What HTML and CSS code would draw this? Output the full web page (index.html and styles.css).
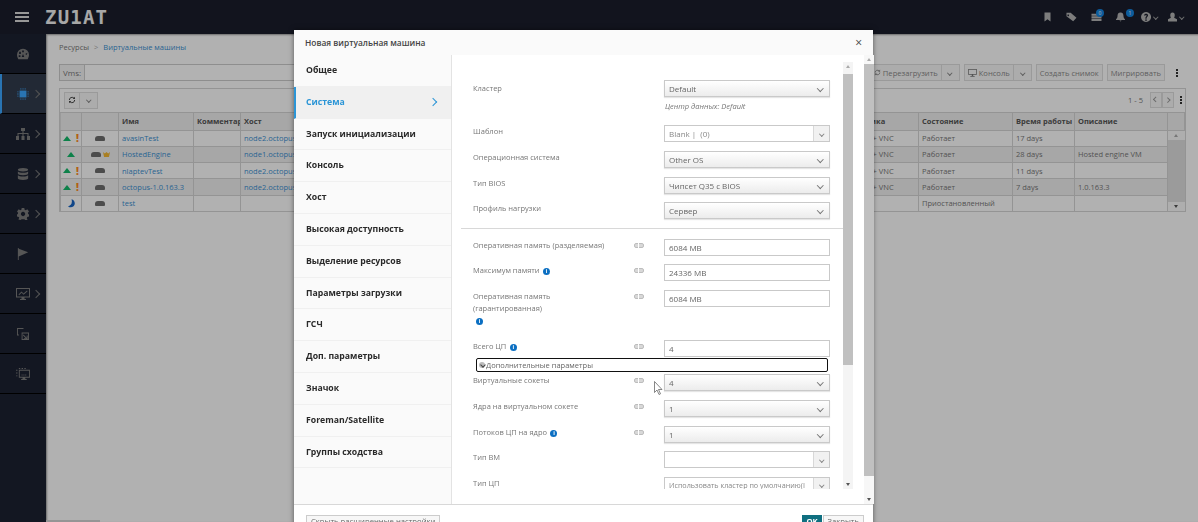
FILE: index.html
```html
<!DOCTYPE html>
<html>
<head>
    <title>Виртуальные машины</title>
    <link rel="stylesheet" href="styles.css">
</head>
<body>
    <header class="topbar">
        <div class="burger"><span></span><span></span><span></span></div>
        <div class="logo">ZU1AT</div>
        <div class="top-icons">
            <svg class="top-icon icon-sm" viewBox="0 0 12 12"><path d="M2 0h8v12L6 9l-4 3z"/></svg>
            <svg class="top-icon icon-lg" viewBox="0 0 12 12"><path d="M0 1h5l7 6-4 4-8-6zM2 3a1 1 0 1 0 .1 0z" fill-rule="evenodd"/></svg>
            <div class="top-badge-wrap">
                <svg class="top-icon icon-lg" viewBox="0 0 12 12"><path d="M0 2h12v2.500H0zM0 5.200h12v2.500H0zM0 8.400h12v2.500H0z"/></svg>
                <span class="badge badge-stack">0</span>
            </div>
            <div class="top-badge-wrap">
                <svg class="top-icon icon-sm" viewBox="0 0 12 12"><path d="M6 0c3 0 4 2 4 5 0 2 1 3 2 4v1H0V9c1-1 2-2 2-4 0-3 1-5 4-5zM4.500 10.500h3L6 12z"/></svg>
                <span class="badge badge-bell">1</span>
            </div>
            <div class="top-menu top-help">
                <svg class="top-icon" viewBox="0 0 12 12"><path d="M6 0a6 6 0 1 0 .1 0zM5 9h2v1.500H5zM3.500 4C4 1.500 8.500 1.500 8.500 4c0 2-2 1.800-1.800 4H5.300C5 5.500 6.800 5.500 6.600 4.200 6.400 3.300 5.300 3.500 5 4.500z" fill-rule="evenodd"/></svg>
                <i class="caret caret-top"></i>
            </div>
            <div class="top-menu top-user">
                <svg class="top-icon icon-sm" viewBox="0 0 12 12"><path d="M6 0c2 0 3 1.500 3 3.500S8 7 8 7l4 2v3H0V9l4-2s-1-1.500-1-3.500S4 0 6 0z"/></svg>
                <i class="caret caret-top"></i>
            </div>
        </div>
    </header>

    <div class="main">
        <nav class="sidebar">
            <div class="side-item">
                <svg class="side-icon" viewBox="0 0 14 12"><path d="M7 0a7 7 0 0 1 7 7c0 2-.7 3.600-1.500 5h-11C.7 10.600 0 9 0 7a7 7 0 0 1 7-7zM6 2v2h2V2zM2.500 3.500V6h2V3.500zM9.500 6l1.800 1.200.9-2.700zM2 7.500v2h2v-2zM7 6L5.500 9.500h3z" fill-rule="evenodd"/></svg>
            </div>
            <div class="side-item side-active">
                <svg class="side-icon side-chip" viewBox="0 0 14 14"><path d="M3 3h8v8H3z"/><path d="M4 0h1v2H4zM6.500 0h1v2h-1zM9 0h1v2H9zM4 12h1v2H4zM6.500 12h1v2h-1zM9 12h1v2H9zM0 4h2v1H0zM0 6.500h2v1H0zM0 9h2v1H0zM12 4h2v1h-2zM12 6.500h2v1h-2zM12 9h2v1h-2z" opacity=".7"/></svg>
                <i class="side-arrow"></i>
            </div>
            <div class="side-item">
                <svg class="side-icon side-wide" viewBox="0 0 14 12"><path d="M5 0h4v3H7.500v2H12.500v3H14v4h-3V8h.5V6h-4v2H8.500v4h-3V8h1V6h-4v2H3v4H0V8h1.500V5h5V3H5z"/></svg>
                <i class="side-arrow"></i>
            </div>
            <div class="side-item">
                <svg class="side-icon" viewBox="0 0 12 14"><path d="M0 2c0-1 2.500-2 6-2s6 1 6 2-2.500 2-6 2-6-1-6-2zM0 4c1 1 3 1.500 6 1.500S11 5 12 4v2.500c0 1-2.500 2-6 2s-6-1-6-2zM0 8.500c1 1 3 1.500 6 1.500s5-.5 6-1.500V12c0 1-2.500 2-6 2s-6-1-6-2z"/></svg>
                <i class="side-arrow"></i>
            </div>
            <div class="side-item">
                <svg class="side-icon" viewBox="0 0 14 14"><path d="M5.500 0h3l.4 2 1.400.6L12 1.500 14 4l-1.300 1.500.3 1.500 1 .5v2.500l-2 .5-.6 1.400 1 1.800-2.400.7-1.400-1.300H5.400L4 14l-2.400-.7 1-1.800L2 10.500 0 10V7.500l1-.5.300-1.500L0 4l2-2.500 1.700 1.100L5.100 2zM7 4.500a2.500 2.500 0 1 0 .1 0z" fill-rule="evenodd"/></svg>
                <i class="side-arrow"></i>
            </div>
            <div class="side-item">
                <svg class="side-icon" viewBox="0 0 14 14"><path d="M1 0h1v14H1zM2 1l11 4-11 5z"/></svg>
            </div>
            <div class="side-item">
                <svg class="side-icon side-wide" viewBox="0 0 14 12"><path d="M0 0h14v9.500H8.500V11H10v1H4v-1h1.500V9.500H0zM1 1v7.500h12V1zM2.500 6.500l3-3 2 2 3.500-3 .6.700-4 3.500-2-2-2.500 2.500z" fill-rule="evenodd"/></svg>
                <i class="side-arrow"></i>
            </div>
            <div class="side-item">
                <svg class="side-icon" viewBox="0 0 13 13"><path d="M0 0h7v1H1v6h1v1H0zM5 5h8v8H5zM6 6v6h6V6zM7 7l3.500 3.500V8h1v4h-4v-1h2L6.500 8z" fill-rule="evenodd"/></svg>
            </div>
            <div class="side-item">
                <svg class="side-icon side-wide" viewBox="0 0 15 13"><path d="M3 2h12v8.500h-5V12h1.500v1h-6v-1H7v-1.500H3zM4 3v6.500h10V3zM6 7h1v1H6zM8 7h1v1H8zM10 7h1v1h-1zM0 2h1.500v1H0zM0 5h1.500v1H0zM0 8h1.500v1H0zM3 0h1.500v1H3zM6 0h1.500v1H6zM9 0h1.500v1H9z" fill-rule="evenodd"/></svg>
            </div>
        </nav>

        <section class="content">
            <div class="breadcrumb">
                <span>Ресурсы</span><span class="crumb-sep">&gt;</span><a class="link">Виртуальные машины</a>
            </div>
            <div class="actions">
                <div class="search"><span class="search-label">Vms:</span><span class="search-box"></span></div>
                <div class="btn-group">
                    <span class="btn">
                        <svg class="refresh-icon" viewBox="0 0 12 12"><path d="M10 6a4 4 0 0 1-7 2.600M2 6a4 4 0 0 1 7-2.600"/><path class="refresh-head" d="M10.500 1v3.500H7zM1.500 11V7.500H5z"/></svg>
                        Перезагрузить
                    </span>
                    <span class="btn btn-caret"><i class="caret"></i></span>
                </div>
                <div class="btn-group">
                    <span class="btn">
                        <svg class="btn-icon" viewBox="0 0 12 11"><path d="M0 0h12v8H7v1.500h2v1H3v-1h2V8H0zM1 1v6h10V1z" fill-rule="evenodd"/></svg>
                        Консоль
                    </span>
                    <span class="btn btn-caret"><i class="caret"></i></span>
                </div>
                <span class="btn">Создать снимок</span>
                <span class="btn">Мигрировать</span>
                <span class="kebab"><i></i><i></i><i></i></span>
            </div>

            <div class="grid-wrap">
                <div class="grid-tools">
                    <div class="btn-group">
                        <span class="btn btn-refresh">
                            <svg class="refresh-icon refresh-dark" viewBox="0 0 12 12"><path d="M10 6a4 4 0 0 1-7 2.600M2 6a4 4 0 0 1 7-2.600"/><path class="refresh-head" d="M10.500 1v3.500H7zM1.500 11V7.500H5z"/></svg>
                        </span>
                        <span class="btn btn-caret"><i class="caret"></i></span>
                    </div>
                    <div class="pager">
                        <span class="pager-count">1 - 5</span>
                        <div class="btn-group">
                            <span class="btn btn-page"><i class="page-arrow page-prev"></i></span>
                            <span class="btn btn-page"><i class="page-arrow page-next"></i></span>
                        </div>
                        <span class="kebab"><i></i><i></i><i></i></span>
                    </div>
                </div>
                <table class="grid">
                    <colgroup>
                        <col class="c-status"><col class="c-type"><col class="c-name"><col class="c-comment"><col class="c-host">
                        <col class="c-ip"><col class="c-fqdn"><col class="c-cluster"><col class="c-dc"><col class="c-gfx">
                        <col class="c-state"><col class="c-uptime"><col class="c-desc"><col class="c-bar">
                    </colgroup>
                    <thead>
                        <tr>
                            <th></th><th></th><th>Имя</th><th>Комментар</th><th>Хост</th>
                            <th>IP-адрес</th><th>FQDN</th><th>Кластер</th><th>Дата-центр</th><th>Графика</th>
                            <th>Состояние</th><th>Время работы</th><th>Описание</th><th></th>
                        </tr>
                    </thead>
                    <tbody>
                        <tr>
                            <td><div class="status"><i class="up"></i><i class="warn">!</i></div></td>
                            <td><div class="vm-type"><i class="vm"></i></div></td>
                            <td><a class="link">avasinTest</a></td><td></td><td><a class="link">node2.octopus</a></td>
                            <td></td><td></td><td></td><td></td><td>SPICE + VNC</td>
                            <td>Работает</td><td>17 days</td><td></td>
                            <td class="bar-cell" rowspan="5"><div class="table-bar"><i class="bar-up"></i><i class="bar-thumb"></i><i class="bar-down"></i></div></td>
                        </tr>
                        <tr class="alt">
                            <td><div class="status"><i class="up"></i></div></td>
                            <td>
                                <div class="vm-type">
                                    <i class="vm"></i>
                                    <svg class="crown" viewBox="0 0 10 7"><path d="M0 0l2.500 2L5 0l2.500 2L10 0 8.500 7h-7z"/></svg>
                                </div>
                            </td>
                            <td><a class="link">HostedEngine</a></td><td></td><td><a class="link">node1.octopus</a></td>
                            <td></td><td></td><td></td><td></td><td>SPICE + VNC</td>
                            <td>Работает</td><td>28 days</td><td>Hosted engine VM</td>
                        </tr>
                        <tr>
                            <td><div class="status"><i class="up"></i><i class="warn">!</i></div></td>
                            <td><div class="vm-type"><i class="vm"></i></div></td>
                            <td><a class="link">nlaptevTest</a></td><td></td><td><a class="link">node2.octopus</a></td>
                            <td></td><td></td><td></td><td></td><td>SPICE + VNC</td>
                            <td>Работает</td><td>11 days</td><td></td>
                        </tr>
                        <tr class="alt">
                            <td><div class="status"><i class="up"></i><i class="warn">!</i></div></td>
                            <td><div class="vm-type"><i class="vm"></i></div></td>
                            <td><a class="link">octopus-1.0.163.3</a></td><td></td><td><a class="link">node2.octopus</a></td>
                            <td></td><td></td><td></td><td></td><td>SPICE + VNC</td>
                            <td>Работает</td><td>7 days</td><td>1.0.163.3</td>
                        </tr>
                        <tr>
                            <td>
                                <div class="status">
                                    <svg class="moon" viewBox="0 0 8 10"><path d="M4 0C8 1 9 6 6 8.500 4 10 1.500 9.500 0 8 3 8 5.500 5 4 0z"/></svg>
                                </div>
                            </td>
                            <td><div class="vm-type"><i class="vm"></i></div></td>
                            <td><a class="link">test</a></td><td></td><td></td>
                            <td></td><td></td><td></td><td></td><td></td>
                            <td>Приостановленный</td><td></td><td></td>
                        </tr>
                    </tbody>
                </table>
            </div>
        </section>
    </div>

    <div class="backdrop"></div>
    <div class="page-scroll"></div>

    <div class="modal">
        <div class="modal-head">
            <span class="modal-title">Новая виртуальная машина</span>
            <span class="modal-close">&times;</span>
        </div>
        <div class="modal-body">
            <ul class="tabs">
                <li>Общее</li>
                <li class="tab-active">Система<i class="tab-arrow"></i></li>
                <li>Запуск инициализации</li>
                <li>Консоль</li>
                <li>Хост</li>
                <li>Высокая доступность</li>
                <li>Выделение ресурсов</li>
                <li>Параметры загрузки</li>
                <li>ГСЧ</li>
                <li>Доп. параметры</li>
                <li>Значок</li>
                <li>Foreman/Satellite</li>
                <li>Группы сходства</li>
            </ul>
            <div class="panel">
                <div class="form-wrap">
                    <div class="form">
                        <div class="row row-first">
                            <label>Кластер</label>
                            <div class="select">Default</div>
                        </div>
                        <div class="hint">Центр данных: Default</div>
                        <div class="row">
                            <label>Шаблон</label>
                            <div class="combo"><input class="combo-input" value="Blank |  (0)" readonly><span class="combo-btn"><i class="caret"></i></span></div>
                        </div>
                        <div class="row">
                            <label>Операционная система</label>
                            <div class="select">Other OS</div>
                        </div>
                        <div class="row">
                            <label>Тип BIOS</label>
                            <div class="select">Чипсет Q35 с BIOS</div>
                        </div>
                        <div class="row">
                            <label>Профиль нагрузки</label>
                            <div class="select">Сервер</div>
                        </div>
                        <hr class="divider">
                        <div class="row">
                            <label>Оперативная память (разделяемая)</label>
                            <i class="chain"></i>
                            <input class="input" value="6084 MB" readonly>
                        </div>
                        <div class="row">
                            <label>Максимум памяти <i class="info">i</i></label>
                            <i class="chain"></i>
                            <input class="input" value="24336 MB" readonly>
                        </div>
                        <div class="row row-tall">
                            <label>Оперативная память<br>(гарантированная)<br><i class="info info-own">i</i></label>
                            <i class="chain"></i>
                            <input class="input" value="6084 MB" readonly>
                        </div>
                        <div class="row row-cpu">
                            <label>Всего ЦП <i class="info">i</i></label>
                            <i class="chain"></i>
                            <input class="input" value="4" readonly>
                        </div>
                        <div class="advanced"><i class="adv-caret"></i>Дополнительные параметры</div>
                        <div class="row">
                            <label>Виртуальные сокеты</label>
                            <i class="chain"></i>
                            <div class="select">4</div>
                        </div>
                        <div class="row">
                            <label>Ядра на виртуальном сокете</label>
                            <i class="chain"></i>
                            <div class="select">1</div>
                        </div>
                        <div class="row">
                            <label>Потоков ЦП на ядро <i class="info">i</i></label>
                            <i class="chain"></i>
                            <div class="select">1</div>
                        </div>
                        <div class="row">
                            <label>Тип ВМ</label>
                            <div class="combo"><input class="combo-input" readonly><span class="combo-btn"><i class="caret"></i></span></div>
                        </div>
                        <div class="row">
                            <label>Тип ЦП</label>
                            <div class="combo"><input class="combo-input combo-long" value="Использовать кластер по умолчанию(I" readonly><span class="combo-btn"><i class="caret"></i></span></div>
                        </div>
                    </div>
                    <div class="scrollbar scrollbar-inner"><i class="bar-up"></i><i class="inner-thumb"></i><i class="bar-down"></i></div>
                </div>
                <div class="scrollbar scrollbar-outer"><i class="bar-up"></i><i class="outer-thumb"></i><i class="bar-down"></i></div>
            </div>
        </div>
        <div class="modal-foot">
            <span class="foot-btn">Скрыть расширенные настройки</span>
            <div class="foot-right">
                <span class="foot-btn foot-ok">OK</span>
                <span class="foot-btn">Закрыть</span>
            </div>
        </div>
        <svg class="pointer" viewBox="0 0 9 14"><path d="M.5.500v11l2.500-2.500 2 4.500 1.500-.7-2-4.300h3.500z"/></svg>
    </div>
</body>
</html>
```

FILE: styles.css
```css
* {
    box-sizing: border-box;
}
html, body {
    height: 100%;
}
body {
    margin: 0;
    overflow: hidden;
    font-family: "Open Sans", sans-serif;
    font-size: 8px;
    color: #777;
    background-color: #fefefe;
}
i {
    font-style: normal;
}

/* top bar */
.topbar {
    display: flex;
    align-items: center;
    height: 34px;
    background-color: #1a1e2c;
    padding-left: 15px;
}
.burger {
    display: flex;
    flex-direction: column;
    gap: 2.5px;
    width: 14px;
}
.burger span {
    height: 1.5px;
    background-color: #d8d8d8;
}
.logo {
    margin-left: 16px;
    font-family: "DejaVu Sans Mono", monospace;
    font-size: 19px;
    font-weight: 700;
    letter-spacing: 1.2px;
    color: #f0f0f0;
}
.top-icons {
    display: flex;
    align-items: center;
    margin-left: auto;
    padding-right: 15px;
    gap: 14px;
}
.top-icon {
    display: block;
    width: 10px;
    height: 10px;
    fill: #b4b4b4;
}
.icon-sm {
    width: 9px;
}
.icon-lg {
    width: 11px;
}
.top-badge-wrap {
    position: relative;
}
.badge {
    position: absolute;
    top: -3px;
    width: 8px;
    height: 8px;
    border-radius: 50%;
    background-color: #1484e0;
    color: #fff;
    font-size: 5px;
    line-height: 8px;
    text-align: center;
}
.badge-stack {
    left: 5px;
}
.badge-bell {
    left: 10px;
}
.top-menu {
    display: flex;
    align-items: center;
    gap: 3px;
}
.top-help {
    margin-left: 2px;
}
.top-user {
    margin-left: -4px;
}
.caret {
    display: inline-block;
    width: 3.5px;
    height: 3.5px;
    border-right: 1px solid #888;
    border-bottom: 1px solid #888;
    transform: rotate(45deg);
}
.caret-top {
    border-color: #a0a0a0;
}

/* sidebar */
.main {
    display: flex;
    height: 488px;
}
.sidebar {
    width: 46px;
    flex: none;
    background-color: #1c2232;
}
.side-item {
    position: relative;
    display: flex;
    align-items: center;
    height: 40px;
    border-bottom: 1px solid #000;
}
.side-icon {
    position: absolute;
    left: 17px;
    width: 12px;
    height: 12px;
    fill: #7c7c7c;
}
.side-wide {
    left: 16px;
    width: 14px;
}
.side-arrow {
    position: absolute;
    left: 33px;
    width: 6px;
    height: 6px;
    border-top: 1px solid #777;
    border-right: 1px solid #777;
    transform: rotate(45deg);
}
.side-active {
    background-color: #323c4d;
    border-left: 2px solid #3ca6ff;
}
.side-active .side-icon {
    left: 15px;
}
.side-active .side-arrow {
    left: 31px;
}
.side-chip {
    fill: #3ca6ff;
}

/* page */
.content {
    flex: 1;
    padding: 0 13px;
    box-shadow: inset 1px 1px 2px rgba(0, 0, 0, 0.4);
}
.breadcrumb {
    display: flex;
    align-items: center;
    height: 24px;
    padding-top: 1px;
    font-size: 7.5px;
}
.crumb-sep {
    margin: 0 5px;
    color: #aaa;
}
.link {
    color: #3a8fd0;
}
.actions {
    display: flex;
    align-items: center;
    gap: 4px;
    height: 17px;
    margin-top: 6px;
}
.search {
    display: flex;
    flex: 1;
    height: 17px;
    border: 1px solid #ccc;
    background-color: #fff;
}
.search-label {
    width: 25px;
    padding-left: 3px;
    line-height: 15px;
    background-color: #f3f3f3;
    border-right: 1px solid #ccc;
}
.btn-group {
    display: flex;
    flex: none;
}
.btn {
    display: flex;
    align-items: center;
    flex: none;
    gap: 2px;
    height: 17px;
    padding: 0 3px;
    border: 1px solid #ddd;
    background-color: #f7f7f7;
    font-size: 7.6px;
    color: #888;
    white-space: nowrap;
}
.btn-caret {
    width: 18px;
    justify-content: center;
    border-left: none;
}
.btn-icon {
    width: 9px;
    height: 8px;
    fill: #777;
}
.kebab {
    display: flex;
    flex-direction: column;
    flex: none;
    gap: 1px;
    width: 2px;
    margin: 0 8px 0 7px;
}
.kebab i {
    height: 2px;
    background-color: #333;
}

/* vm grid */
.grid-wrap {
    margin-top: 6.5px;
    border: 1px solid #d4d4d4;
    border-bottom: none;
}
.grid-tools {
    display: flex;
    align-items: center;
    justify-content: space-between;
    height: 23px;
    padding-left: 4px;
}
.btn-refresh {
    width: 16px;
    justify-content: center;
    padding: 0;
}
.refresh-icon {
    width: 7px;
    height: 7px;
    fill: none;
    stroke: #888;
    stroke-width: 1.5;
}
.refresh-dark {
    width: 8px;
    height: 8px;
    stroke: #444;
}
.refresh-head {
    fill: #888;
    stroke: none;
}
.refresh-dark .refresh-head {
    fill: #444;
}
.pager {
    display: flex;
    align-items: center;
}
.pager-count {
    margin-right: 7px;
    font-size: 7.5px;
}
.btn-page {
    width: 12px;
    height: 16px;
    padding: 0;
    justify-content: center;
}
.pager .kebab {
    margin: 0 3px 0 6px;
}
.page-arrow {
    width: 3.5px;
    height: 3.5px;
    border-top: 1px solid #999;
    border-right: 1px solid #999;
}
.page-prev {
    transform: rotate(-135deg);
}
.page-next {
    transform: rotate(45deg);
}
.grid {
    width: 100%;
    table-layout: fixed;
    border-collapse: collapse;
}
.c-status { width: 21px; }
.c-type { width: 37px; }
.c-name { width: 75px; }
.c-comment { width: 47px; }
.c-host { width: 105px; }
.c-ip { width: 125px; }
.c-fqdn { width: 125px; }
.c-cluster { width: 125px; }
.c-dc { width: 127px; }
.c-gfx { width: 71px; }
.c-state { width: 94px; }
.c-uptime { width: 62px; }
.c-desc { width: 93px; }
.c-bar { width: 17px; }
.grid th {
    height: 18px;
    padding: 0 3px;
    background-color: #f0f0f0;
    border: 1px solid #d4d4d4;
    border-left-color: #ddd;
    text-align: left;
    font-size: 7.5px;
    font-weight: 700;
    color: #555;
    overflow: hidden;
    white-space: nowrap;
}
.grid th:nth-child(4) {
    padding-right: 0;
}
.grid td {
    height: 16.3px;
    padding: 0 3px;
    border: 1px solid #d4d4d4;
    background-color: #fefefe;
    overflow: hidden;
    white-space: nowrap;
    font-size: 7.5px;
}
.grid .alt td {
    background-color: #f0f0f0;
}
.grid .bar-cell {
    padding: 0;
    background-color: #fafafa;
    border-right: none;
}
.table-bar {
    display: flex;
    flex-direction: column;
    height: 80px;
}
.bar-up, .bar-down {
    flex: none;
    width: 0;
    height: 0;
    margin: 3px auto;
    border-left: 2.5px solid transparent;
    border-right: 2.5px solid transparent;
}
.bar-up {
    border-bottom: 3px solid #aaa;
}
.bar-down {
    border-top: 3px solid #555;
}
.bar-thumb {
    flex: 1;
    background-color: #dedede;
}
.status {
    display: flex;
    align-items: center;
    justify-content: center;
    gap: 5px;
}
.up {
    width: 0;
    height: 0;
    border-left: 4px solid transparent;
    border-right: 4px solid transparent;
    border-bottom: 5px solid #13b96a;
}
.warn {
    width: 3px;
    font-size: 10px;
    font-weight: 800;
    line-height: 10px;
    color: #ff8a1c;
}
.moon {
    width: 7px;
    height: 9px;
    fill: #1765c4;
}
.vm-type {
    display: flex;
    align-items: center;
    justify-content: center;
    gap: 2px;
}
.vm {
    width: 10px;
    height: 5px;
    border-radius: 3px 3px 1px 1px;
    background-color: #6d6d6d;
}
.crown {
    width: 7px;
    height: 5px;
    fill: #f2b632;
}
.backdrop {
    position: fixed;
    inset: 0;
    background-color: rgba(0, 0, 0, 0.3);
}
.page-scroll {
    position: absolute;
    left: 46px;
    bottom: 0;
    width: 54px;
    height: 2px;
    background-color: #959595;
}

/* dialog */
.modal {
    position: absolute;
    top: 30px;
    left: 294px;
    width: 579px;
    height: 510px;
    background-color: #fff;
    box-shadow: 0 0 5px rgba(0, 0, 0, 0.5);
}
.modal-head {
    display: flex;
    align-items: center;
    justify-content: space-between;
    height: 25px;
    padding: 0 11px;
    background-color: #fafafa;
}
.modal-title {
    font-size: 8.4px;
    font-weight: 600;
    color: #444;
}
.modal-close {
    font-size: 12px;
    line-height: 12px;
    color: #444;
}
.modal-body {
    display: flex;
    height: 450px;
    border-bottom: 1px solid #d8d8d8;
}
.tabs {
    flex: none;
    width: 158px;
    margin: 0;
    padding: 0;
    list-style: none;
    background-color: #fafafa;
    border-right: 1px solid #e3e3e3;
}
.tabs li {
    position: relative;
    height: 31.8px;
    padding: 9px 12px 0;
    border-bottom: 1px solid #f0f0f0;
    font-size: 8.7px;
    font-weight: 700;
    line-height: 13px;
    color: #2a2a2a;
}
.tabs .tab-active {
    padding-left: 10px;
    background-color: #f0f0f0;
    border-left: 2px solid #2b95d6;
    color: #2b95d6;
}
.tab-arrow {
    position: absolute;
    top: 12px;
    right: 15px;
    width: 6px;
    height: 6px;
    border-top: 1.5px solid #2b95d6;
    border-right: 1.5px solid #2b95d6;
    transform: rotate(45deg);
}
.panel {
    display: flex;
    flex: 1;
}
.form-wrap {
    display: flex;
    flex: none;
    width: 402px;
    height: 434px;
}
.form {
    flex: none;
    width: 391px;
    overflow: hidden;
    padding: 25px 0 0 9px;
}
.row {
    display: flex;
    height: 17px;
    margin-bottom: 8.6px;
    padding-left: 12px;
}
.row-first {
    margin-bottom: 0;
}
.row-first label {
    padding-top: 1.5px;
}
.row-tall {
    height: 41.4px;
}
.row-cpu {
    margin-bottom: 1.4px;
}
label {
    flex: none;
    width: 191px;
    font-size: 7.5px;
    line-height: 12px;
    color: #777;
}
.chain {
    position: relative;
    flex: none;
    width: 10px;
    height: 5px;
    margin: 4px 20px 0 -30px;
    border: 1.5px solid #bdbdbd;
    border-radius: 2px;
    background-color: #d8d8d8;
}
.chain::after {
    content: "";
    position: absolute;
    top: -2px;
    left: 2.5px;
    width: 1.5px;
    height: 6px;
    background-color: #fff;
}
.info {
    display: inline-block;
    width: 7px;
    height: 7px;
    margin-left: 1.5px;
    border-radius: 50%;
    background-color: #0b6fc2;
    color: #fff;
    font-size: 5.5px;
    font-weight: 700;
    line-height: 7px;
    text-align: center;
}
.info-own {
    margin: 3px 0 0 3px;
}
.select, .input, .combo {
    flex: none;
    width: 166px;
    height: 17px;
    border: 1px solid #c9c9c9;
    font-size: 8px;
    line-height: 15px;
    color: #666;
}
.select {
    position: relative;
    padding-left: 4px;
    background-image: linear-gradient(#fff, #ececec);
    box-shadow: 0 1px 1px rgba(0, 0, 0, 0.1);
}
.select::after {
    content: "";
    position: absolute;
    top: 5px;
    right: 7px;
    width: 3.5px;
    height: 3.5px;
    border-right: 1px solid #777;
    border-bottom: 1px solid #777;
    transform: rotate(45deg);
}
.input {
    padding: 0 4px;
    font-family: inherit;
    outline: none;
}
.combo {
    display: flex;
}
.combo-input {
    flex: 1;
    min-width: 0;
    padding: 0 4px;
    border: none;
    font-family: inherit;
    font-size: 8px;
    color: #888;
    outline: none;
}
.combo-long {
    font-size: 7.2px;
}
.combo-btn {
    display: flex;
    align-items: center;
    justify-content: center;
    flex: none;
    width: 16px;
    background-color: #f1f1f1;
    border-left: 1px solid #d8d8d8;
}
.hint {
    height: 19.4px;
    margin-bottom: 9px;
    margin-left: 204px;
    padding-top: 3px;
    font-size: 7.5px;
    font-style: italic;
    line-height: 12px;
    color: #777;
}
.divider {
    height: 1px;
    margin: 0 0 10px;
    border: none;
    background-color: #d8d8d8;
}
.advanced {
    display: flex;
    align-items: center;
    width: 352px;
    height: 14px;
    margin: 0 0 2px 15px;
    padding-left: 2px;
    border: 1.5px solid #111;
    border-radius: 2px;
    font-size: 7.5px;
    color: #666;
}
.adv-caret {
    position: relative;
    width: 6px;
    height: 6px;
    margin-right: 1px;
    border-radius: 50%;
    background-color: #bbb;
}
.adv-caret::after {
    content: "";
    position: absolute;
    top: 0.5px;
    left: 1.5px;
    width: 3px;
    height: 3px;
    border-right: 1px solid #444;
    border-bottom: 1px solid #444;
    transform: rotate(45deg);
}
.scrollbar {
    display: flex;
    flex-direction: column;
    flex: none;
    width: 10px;
    background-color: #f7f7f7;
}
.scrollbar-inner {
    height: 427px;
    margin-top: 7px;
    background-color: #f4f4f4;
}
.inner-thumb {
    height: 291px;
    margin-top: 3px;
    background-color: #c0c0c0;
}
.scrollbar-inner .bar-down {
    margin-top: auto;
}
.scrollbar-outer {
    margin-left: 10px;
    height: 449px;
}
.outer-thumb {
    height: 412px;
    background-color: #c0c0c0;
}
.scrollbar-outer .bar-down {
    margin-top: auto;
}
.modal-foot {
    display: flex;
    justify-content: space-between;
    padding: 10px 9px 0 12px;
}
.foot-btn {
    display: inline-block;
    height: 18px;
    padding: 0 4px;
    border: 1px solid #ccc;
    background-color: #f7f7f7;
    font-size: 7.7px;
    line-height: 10px;
    color: #666;
    white-space: nowrap;
}
.foot-right {
    display: flex;
    gap: 1px;
}
.foot-ok {
    width: 20px;
    border-color: #0f6f80;
    background-color: #0f6f80;
    color: #fff;
    font-weight: 700;
}
.pointer {
    position: absolute;
    top: 351px;
    left: 360px;
    width: 9px;
    height: 14px;
    fill: #fff;
    stroke: #555;
    stroke-width: 0.7;
}
```
